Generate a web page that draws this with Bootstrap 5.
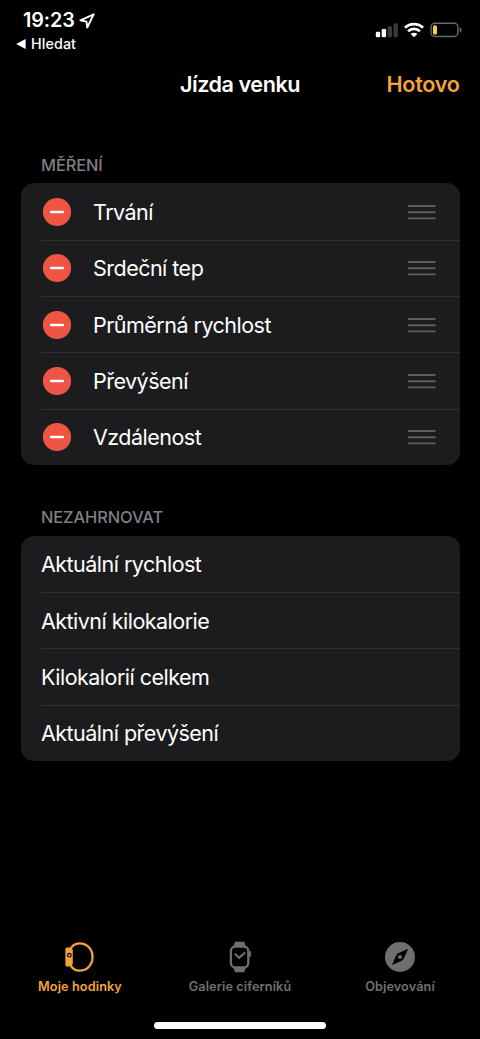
<!DOCTYPE html>
<html lang="cs" data-bs-theme="dark">
<head>
<meta charset="utf-8">
<meta name="viewport" content="width=device-width, initial-scale=1">
<title>Jízda venku</title>
<link href="https://cdn.jsdelivr.net/npm/bootstrap@5.3.0/dist/css/bootstrap.min.css" rel="stylesheet">
<style>
  html, body { height: 100%; }
  body { background: #000; color: #fff; font-family: Inter, "Liberation Sans", sans-serif; overflow: hidden; }
  .screen { width: 480px; height: 1039px; }
  svg { display: block; flex: none; }
  .status { height: 58px; padding: 10px 18px 0 16px; }
  .clock { font-size: 19.8px; font-weight: 600; line-height: 21px; letter-spacing: -.1px; padding-left: 7px; gap: 4px; }
  .back-app { font-size: 14.3px; font-weight: 500; line-height: 18px; letter-spacing: .1px; margin-top: 4px; gap: 5px; }
  .signals { gap: 6px; padding-top: 12px; }
  .titlebar { height: 53px; padding: 0 20.5px; font-size: 21.6px; font-weight: 600; line-height: 53px; letter-spacing: -.45px; }
  .amber { color: #f2a33c; }
  .done { letter-spacing: -.3px; }
  .section-label { font-size: 16.4px; line-height: 20px; color: #7f7f84; padding-left: 41px; letter-spacing: -.08px; margin: 44px 0 8.400px; }
  .section-label.second { margin-top: 42.500px; }
  .measures { --bs-list-group-bg: #1c1c1e; --bs-list-group-color: #fff; --bs-list-group-border-radius: 13px; margin: 0 20.5px; background: #1c1c1e; border-radius: 13px; overflow: hidden; }
  .measures .list-group-item { height: 56.3px; padding: 1px 24px 0 0; margin-left: 20.5px; border: 0; background: none; font-size: 21.5px; letter-spacing: -.52px; line-height: 30px; }
  .measures .list-group-item + .list-group-item { box-shadow: inset 0 1px #303033; }
  .measures .name { margin-left: 21.500px; }
  .remove-icon { margin-left: .5px; }
  .tab { width: 160px; font-size: 12.7px; font-weight: 600; line-height: 16px; color: #6f6f6f; gap: 6px; letter-spacing: .1px; }
  .tab.current { color: #f2a33c; }
  .home-bar { width: 172px; height: 7px; background: #fff; border-radius: 4px; margin-top: 27px; margin-bottom: 10px; }
</style>
</head>
<body>
<svg width="0" height="0" class="position-absolute">
  <symbol id="remove" viewBox="0 0 30 30"><circle cx="15" cy="15" r="14.1" fill="#ee5545"/><path d="M9 15h12" stroke="#fff" stroke-width="2.3" stroke-linecap="round"/></symbol>
  <symbol id="grip" viewBox="0 0 28 16"><path d="M0 2h27.5M0 8.2h27.5M0 14.4h27.5" stroke="#5d5d61" stroke-width="1.9"/></symbol>
</svg>
<div class="screen d-flex flex-column">
  <header class="status d-flex justify-content-between align-items-start">
    <div>
      <div class="clock d-flex align-items-center"><span>19:23</span>
        <svg width="16" height="16" viewBox="0 0 16 16" fill="none" stroke="#fff" stroke-width="1.9" stroke-linejoin="round"><path d="M14.7 1.3 1.4 7.300l6.100 1.300.7 5.900z"/></svg>
      </div>
      <div class="back-app d-flex align-items-center">
        <svg width="10" height="10" viewBox="0 0 10 10"><path d="M.2 5 9.6.1v9.800z" fill="#fff"/></svg><span>Hledat</span>
      </div>
    </div>
    <div class="signals d-flex align-items-center">
      <svg width="23" height="16" viewBox="0 0 23 16"><g fill="#fff"><rect x=".8" y="9.8" width="4.4" height="5.4" rx="1.3"/><rect x="6.7" y="7" width="4.4" height="8.2" rx="1.3"/></g><g fill="#39393b"><rect x="12.6" y="4.2" width="4.4" height="11" rx="1.3"/><rect x="18.5" y="1.3" width="4.4" height="13.9" rx="1.3"/></g></svg>
      <svg width="20" height="16" viewBox="0 0 20 16"><g fill="none" stroke="#fff" stroke-width="2.7"><path d="M1 5.800a12.800 12.800 0 0 1 18 0"/><path d="M4.100 9.200a8.400 8.400 0 0 1 11.800 0"/></g><path d="M6.700 12a4.700 4.700 0 0 1 6.600 0L10 15.300z" fill="#fff"/></svg>
      <svg width="32" height="16" viewBox="0 0 32 16"><rect x="1" y="1.3" width="27" height="13.2" rx="4" fill="none" stroke="#69696b" stroke-width="1.4"/><rect x="3" y="3.3" width="4" height="9.4" rx="1.8" fill="#f7ce45"/><path d="M29.7 5.500q2 .8 2 2.400t-2 2.400z" fill="#69696b"/></svg>
    </div>
  </header>

  <nav class="titlebar d-flex">
    <div class="col"></div>
    <div class="text-center">Jízda venku</div>
    <div class="col text-end amber done">Hotovo</div>
  </nav>

  <main class="flex-grow-1">
    <h2 class="section-label">MĚŘENÍ</h2>
    <ul class="list-group measures">
      <li class="list-group-item d-flex align-items-center"><svg class="remove-icon" width="30" height="30"><use href="#remove"/></svg><span class="name">Trvání</span><svg class="ms-auto" width="28" height="16"><use href="#grip"/></svg></li>
      <li class="list-group-item d-flex align-items-center"><svg class="remove-icon" width="30" height="30"><use href="#remove"/></svg><span class="name">Srdeční tep</span><svg class="ms-auto" width="28" height="16"><use href="#grip"/></svg></li>
      <li class="list-group-item d-flex align-items-center"><svg class="remove-icon" width="30" height="30"><use href="#remove"/></svg><span class="name">Průměrná rychlost</span><svg class="ms-auto" width="28" height="16"><use href="#grip"/></svg></li>
      <li class="list-group-item d-flex align-items-center"><svg class="remove-icon" width="30" height="30"><use href="#remove"/></svg><span class="name">Převýšení</span><svg class="ms-auto" width="28" height="16"><use href="#grip"/></svg></li>
      <li class="list-group-item d-flex align-items-center"><svg class="remove-icon" width="30" height="30"><use href="#remove"/></svg><span class="name">Vzdálenost</span><svg class="ms-auto" width="28" height="16"><use href="#grip"/></svg></li>
    </ul>
    <h2 class="section-label second">NEZAHRNOVAT</h2>
    <ul class="list-group measures">
      <li class="list-group-item d-flex align-items-center">Aktuální rychlost</li>
      <li class="list-group-item d-flex align-items-center">Aktivní kilokalorie</li>
      <li class="list-group-item d-flex align-items-center">Kilokalorií celkem</li>
      <li class="list-group-item d-flex align-items-center">Aktuální převýšení</li>
    </ul>
  </main>

  <nav class="d-flex">
    <div class="tab current d-flex flex-column align-items-center">
      <svg width="32" height="32" viewBox="0 0 32 32"><path d="M5.800 9C8 4.400 11.800 2.300 15.500 2.300c7.700 0 13 5.900 13 13.700s-5.300 13.700-13 13.700C11.800 29.700 8 27.600 5.800 23" fill="none" stroke="#f2a33c" stroke-width="2.300"/><path d="M1.400 8q0-1.600 1.600-1.600h3.200q2.600.6 2.600 3v13.200q0 2.400-2.600 3H3q-1.600 0-1.600-1.600z" fill="#f2a33c"/><circle cx="5.300" cy="14.200" r="1.800" fill="#f2a33c" stroke="#000" stroke-width="1.200"/></svg>
      <span>Moje hodinky</span>
    </div>
    <div class="tab d-flex flex-column align-items-center">
      <svg width="32" height="32" viewBox="0 0 32 32"><path d="M9.300 6 11 .8h9.200L21.900 6zM9.300 26 11 31.200h9.200l1.700-5.200z" fill="#6f6f6f"/><rect x="6.900" y="5.500" width="17.400" height="21" rx="4.500" fill="#000" stroke="#6f6f6f" stroke-width="2.300"/><path d="M26 11v4" stroke="#6f6f6f" stroke-width="1.900" stroke-linecap="round"/><path d="m11.300 13.300 3.800 3.600 5.400-4.800" fill="none" stroke="#6f6f6f" stroke-width="2.100" stroke-linecap="round"/></svg>
      <span>Galerie ciferníků</span>
    </div>
    <div class="tab d-flex flex-column align-items-center">
      <svg width="32" height="32" viewBox="0 0 32 32"><circle cx="16" cy="16" r="15" fill="#6f6f6f"/><path d="M23.400 8.600 19.100 18.200 18 19.200 8.600 23.400 12.900 13.800 14 12.800z" fill="#000" stroke="#000" stroke-width=".8" stroke-linejoin="round"/><circle cx="16" cy="16" r="2" fill="#6f6f6f"/></svg>
      <span>Objevování</span>
    </div>
  </nav>
  <div class="home-bar mx-auto"></div>
</div>
<script src="https://cdn.jsdelivr.net/npm/bootstrap@5.3.0/dist/js/bootstrap.bundle.min.js"></script>
</body>
</html>
